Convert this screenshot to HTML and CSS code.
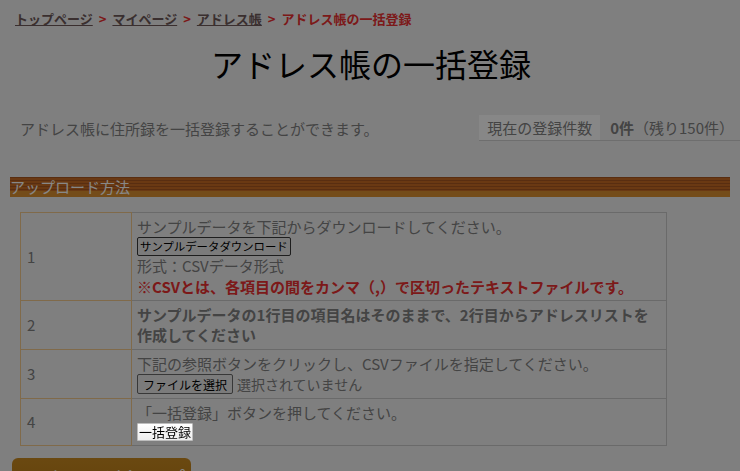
FILE: index.html
```html
<!DOCTYPE html>
<html lang="ja">
<head>
<meta charset="utf-8">
<title>アドレス帳の一括登録</title>
<link rel="stylesheet" href="styles.css">
</head>
<body>
<div class="page">
  <nav class="crumbs">
    <a href="#">トップページ</a><span class="sep">&gt;</span><a href="#">マイページ</a><span class="sep">&gt;</span><a href="#">アドレス帳</a><span class="sep">&gt;</span><span class="current">アドレス帳の一括登録</span>
  </nav>
  <h1 class="title">アドレス帳の一括登録</h1>
  <div class="intro">
    <p class="lead">アドレス帳に住所録を一括登録することができます。</p>
    <table class="count">
      <tr><th>現在の登録件数</th><td><b>0件</b>（残り150件）</td></tr>
    </table>
  </div>
  <h2 class="section">アップロード方法</h2>
  <table class="steps">
    <tr class="r1">
      <th>1</th>
      <td>
        <div class="line">サンプルデータを下記からダウンロードしてください。</div>
        <div class="btnrow"><button class="btn btn-sample">サンプルデータダウンロード</button></div>
        <div class="line">形式：CSVデータ形式</div>
        <div class="line note">※CSVとは、各項目の間をカンマ（,）で区切ったテキストファイルです。</div>
      </td>
    </tr>
    <tr class="r2">
      <th>2</th>
      <td class="strong">サンプルデータの1行目の項目名はそのままで、2行目からアドレスリストを<br>作成してください</td>
    </tr>
    <tr class="r3">
      <th>3</th>
      <td>
        <div class="line">下記の参照ボタンをクリックし、CSVファイルを指定してください。</div>
        <div class="btnrow"><button class="btn btn-file">ファイルを選択</button><span class="nofile">選択されていません</span></div>
      </td>
    </tr>
    <tr class="r4">
      <th>4</th>
      <td>
        <div class="line">「一括登録」ボタンを押してください。</div>
        <div class="btnrow"><button class="btn btn-submit">一括登録</button></div>
      </td>
    </tr>
  </table>
  <a class="mypage" href="#">マイページトップ</a>
</div>
<div class="overlay"></div>
</body>
</html>
```
FILE: styles.css
```css
html, body {
  margin: 0;
  padding: 0;
  background: #f0f0f0;
  height: 100%;
  overflow: hidden;
}
body {
  font-family: "Noto Sans CJK JP", "Noto Sans", sans-serif;
  color: #808080;
}
.page {
  padding: 10px 0 0 10px;
}
.crumbs {
  padding-left: 5px;
  font-size: 13px;
  font-weight: bold;
  line-height: 18px;
  color: #ea3030;
}
.crumbs a {
  color: #6f5a5a;
  text-decoration: underline;
}
.crumbs .sep {
  margin: 0 6px;
}
.title {
  margin: 15px 0 0;
  padding-right: 8px;
  text-align: center;
  font-size: 32px;
  font-weight: normal;
  line-height: 40px;
  color: #000;
}
.intro {
  margin-top: 32px;
  display: flex;
  justify-content: space-between;
  align-items: flex-end;
}
.lead {
  margin: 0 0 0 10px;
  font-size: 15px;
  line-height: 25px;
}
.count {
  border-collapse: collapse;
  border-bottom: 1px solid #d0d0d0;
  font-size: 15px;
  line-height: 25px;
}
.count th {
  background: #ffffff;
  font-weight: normal;
  padding: 0 8px;
  text-align: left;
}
.count td {
  padding: 0 6px 0 10px;
  white-space: nowrap;
}
.section {
  margin: 36px 10px 0 0;
  height: 20px;
  font-size: 15px;
  font-weight: normal;
  line-height: 20px;
  color: #fff;
  background:
    linear-gradient(#dc9030, #dc9030) left bottom / 100% 6px no-repeat,
    repeating-linear-gradient(to bottom, #a85820 0 1px, #c86c24 1px 3px);
}
.steps {
  margin: 15px 0 0 10px;
  width: 647px;
  border-collapse: collapse;
  font-size: 15px;
  line-height: 20px;
}
.steps th {
  width: 104px;
  padding: 0 0 0 6px;
  border: 1px solid #f1c88c;
  font-weight: normal;
  text-align: left;
  vertical-align: middle;
}
.steps td {
  padding: 4px 5px;
  border: 1px solid #c8c8c8;
  vertical-align: top;
}
.steps .r1 td { padding: 4px 5px 3px; }
.steps td.strong {
  font-weight: bold;
}
.note {
  color: #ea3030;
  font-weight: bold;
  line-height: 21px;
}
.btnrow {
  display: flex;
  align-items: center;
}
.btn {
  font-family: "Noto Sans CJK JP", sans-serif;
  font-size: 12px;
  line-height: 15px;
  color: #000;
  margin: 0;
}
.btn-sample {
  height: 19px;
  padding: 0 2px;
  font-size: 11.4px;
  background: #e8e8e8;
  border: 1px solid #393939;
  border-radius: 2px;
}
.btn-file {
  height: 20px;
  padding: 0 5px;
  background: #e8e8e8;
  border: 1px solid #6a6a6a;
  border-radius: 2px;
}
.nofile {
  margin-left: 4px;
  font-size: 14px;
  color: #808080;
}
.btn-submit {
  position: relative;
  z-index: 20;
  height: 18px;
  padding: 0 1px;
  font-size: 13px;
  line-height: 16px;
  background: linear-gradient(#ffffff, #ededed);
  border: 1px solid #bdbdbd;
  border-radius: 1px;
}
.mypage {
  display: block;
  width: 179px;
  height: 40px;
  margin: 12px 0 0 2px;
  padding-top: 4px;
  box-sizing: border-box;
  border-radius: 6px;
  background: linear-gradient(#c98a20, #b87a18);
  color: #fff;
  font-size: 21px;
  line-height: 30px;
  text-align: center;
  text-decoration: none;
  font-family: "Noto Sans CJK JP", serif;
}
.overlay {
  position: fixed;
  inset: 0;
  background: rgba(0, 0, 0, 0.47);
  z-index: 10;
}
```
